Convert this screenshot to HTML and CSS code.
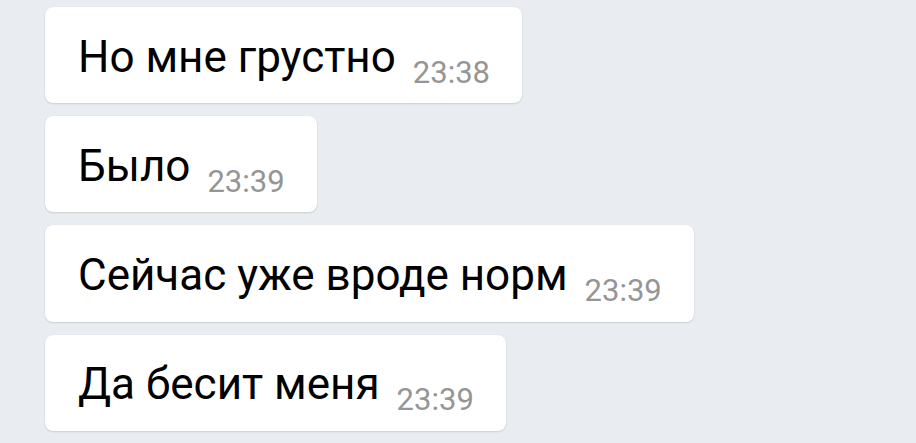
FILE: index.html
```html
<!DOCTYPE html>
<html lang="ru">
<head>
<meta charset="utf-8">
<link rel="stylesheet" href="styles.css">
</head>
<body>
<div class="chat">
  <div class="msg"><span class="text">Но мне грустно</span><span class="time">23:38</span></div>
  <div class="msg"><span class="text">Было</span><span class="time">23:39</span></div>
  <div class="msg"><span class="text">Сейчас уже вроде норм</span><span class="time">23:39</span></div>
  <div class="msg"><span class="text">Да бесит меня</span><span class="time">23:39</span></div>
  <div class="msg msg-next"></div>
</div>
</body>
</html>
```
FILE: styles.css
```css
html, body {
  margin: 0;
  padding: 0;
  background: #e9edf2;
  overflow: hidden;
}
.chat {
  display: flex;
  flex-direction: column;
  align-items: flex-start;
  gap: 13px;
  padding: 7px 0 0 45px;
  font-family: Roboto, "Noto Sans", sans-serif;
}
.msg {
  display: flex;
  align-items: flex-start;
  gap: 17px;
  background: #ffffff;
  border-radius: 8px;
  box-shadow: 0 0 1px rgba(0, 0, 0, 0.10), 0 1px 2px rgba(0, 0, 0, 0.12);
  padding: 23.5px 32px 12.5px 33px;
}
.msg-next {
  width: 490px;
  height: 60px;
  padding: 0;
}
.text {
  font-size: 44px;
  line-height: 52px;
  color: #000000;
}
.time {
  font-size: 31px;
  line-height: 36px;
  color: #959595;
  margin-top: 24.2px;
}
```
